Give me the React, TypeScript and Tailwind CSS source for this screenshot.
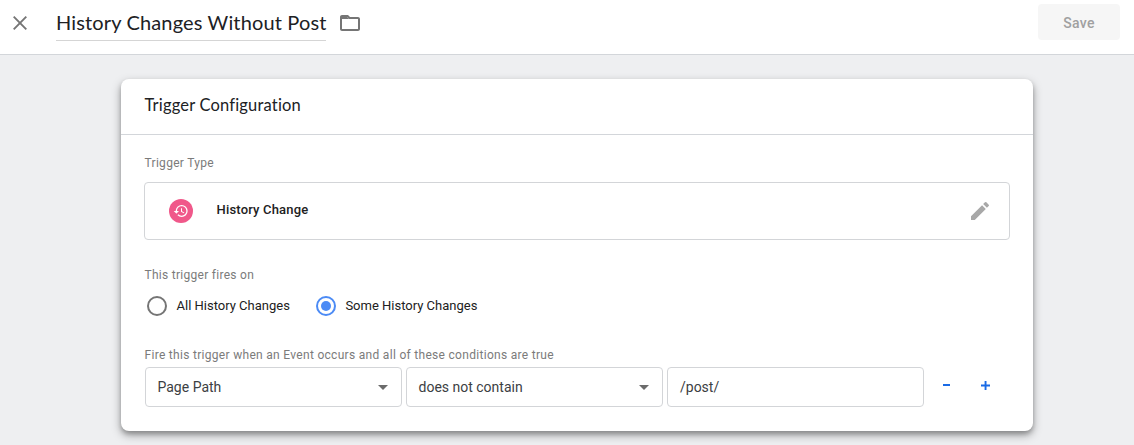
import React from "react";

function Radio({ label, checked }: { label: string; checked?: boolean }) {
  return (
    <label className="flex h-5 items-center gap-[9.5px]">
      <span
        className={
          checked
            ? "flex size-5 items-center justify-center rounded-full border-2 border-[#4c8bf5]"
            : "flex size-5 items-center justify-center rounded-full border-2 border-[#757575]"
        }
      >
        {checked && <span className="size-[10px] rounded-full bg-[#4c8bf5]" />}
      </span>
      <span className="text-[13px] leading-5 text-[#212121]">{label}</span>
    </label>
  );
}

function Select({ value }: { value: string }) {
  return (
    <div className="flex h-10 w-[257px] items-center justify-between rounded border border-[#d3d5d8] pr-[13px] pl-[11.5px]">
      <span className="text-sm leading-5 text-[#3c4043]">{value}</span>
      <svg className="h-[5px] w-[10px]" viewBox="0 0 10 5" fill="#6b6b6b">
        <path d="M0 0h10L5 5z" />
      </svg>
    </div>
  );
}

export default function App() {
  return (
    <div className="flex h-[445px] w-[1134px] flex-col overflow-hidden bg-[#eeeff1] font-['Roboto',sans-serif]">
      <header className="flex h-[55px] shrink-0 items-start border-b border-[#d3d6da] bg-white pl-[13px] pr-[14px]">
        <svg className="mt-4 size-[14px]" viewBox="0 0 14 14" fill="none" stroke="#757575" strokeWidth="1.9">
          <path d="M.7.7l12.6 12.6M13.3.7L.7 13.3" />
        </svg>
        <h1 className="ml-[29px] h-[41px] w-[270px] border-b border-[#d5d5d5] pt-2 font-['Lato',sans-serif] text-[20px] leading-7 tracking-[0.15px] whitespace-nowrap text-[#202124]">
          History Changes Without Post
        </h1>
        <svg className="mt-[11px] ml-3 size-6" viewBox="0 0 24 24" fill="#757575">
          <path d="M9.17 6l2 2H20v10H4V6h5.17M10 4H4c-1.1 0-1.99.9-1.99 2L2 18c0 1.1.9 2 2 2h16c1.1 0 2-.9 2-2V8c0-1.1-.9-2-2-2h-8l-2-2z" />
          <path d="M4 6h5.17l2 2H4z" />
        </svg>
        <button className="mt-1 ml-auto h-9 w-[82px] rounded bg-[#f6f6f6] pt-0.5 text-sm font-medium tracking-[0.25px] text-[#a0a0a0]">
          Save
        </button>
      </header>
      <main className="mt-6 ml-[121px] h-[352px] w-[912px] shrink-0 rounded-lg bg-white shadow-[0_4px_10px_rgba(0,0,0,0.35),0_3px_4px_rgba(0,0,0,0.18)]">
        <div className="h-14 border-b border-[#d3d6da] pt-[14px] pl-[23.5px]">
          <h2 className="font-['Lato',sans-serif] text-[16.5px] leading-6 tracking-[0.18px] text-[#202124]">
            Trigger Configuration
          </h2>
        </div>
        <div className="pt-5 pr-[23px] pl-[23px]">
          <div className="h-[27px] pl-[0.5px] text-xs leading-4 tracking-[0.3px] text-[#7b7b7b]">Trigger Type</div>
          <div className="flex h-[58px] items-center rounded border border-[#d3d5d8] pr-[17px] pl-6">
            <span className="flex size-6 items-center justify-center rounded-full bg-[#f0588a]">
              <svg className="mr-px size-4" viewBox="0 0 24 24" fill="#fff">
                <path d="M13 3a9 9 0 0 0-9 9H1l3.89 3.89.07.14L9 12H6c0-3.87 3.13-7 7-7s7 3.13 7 7-3.13 7-7 7c-1.93 0-3.68-.79-4.94-2.06l-1.42 1.42A8.95 8.95 0 0 0 13 21a9 9 0 0 0 0-18zm-1 5v5l4.28 2.54.72-1.21-3.5-2.08V8H12z" />
              </svg>
            </span>
            <span className="mb-[3px] ml-[23.5px] text-[13px] leading-5 font-medium tracking-[0.18px] text-[#212121]">
              History Change
            </span>
            <svg className="ml-auto size-6" viewBox="0 0 24 24" fill="#a8a8a8">
              <path d="M3 17.25V21h3.75L17.81 9.94l-3.75-3.75L3 17.25zM20.71 7.04a1 1 0 0 0 0-1.41l-2.34-2.34a1 1 0 0 0-1.41 0l-1.83 1.83 3.75 3.75 1.83-1.83z" />
            </svg>
          </div>
          <div className="mt-[27px] pl-[0.5px] text-xs leading-4 tracking-[0.28px] text-[#7b7b7b]">
            This trigger fires on
          </div>
          <div className="mt-[13px] flex gap-[26px] pl-[3px]">
            <Radio label="All History Changes" />
            <Radio label="Some History Changes" checked />
          </div>
          <div className="mt-[31px] pl-[0.5px] text-xs leading-4 tracking-[0.3px] text-[#7b7b7b]">
            Fire this trigger when an Event occurs and all of these conditions are true
          </div>
          <div className="mt-1 flex gap-1 pl-px">
            <Select value="Page Path" />
            <Select value="does not contain" />
            <div className="flex h-10 w-[257px] items-center rounded border border-[#d3d5d8] pl-3 text-sm text-[#3c4043]">
              /post/
            </div>
            <div className="ml-[15px] flex items-start gap-[31px] pt-[14px]">
              <svg className="h-[9px] w-[7px]" viewBox="0 0 7 9" fill="#1a6be6">
                <path d="M0 3h7v2H0z" />
              </svg>
              <svg className="size-[9px]" viewBox="0 0 9 9" fill="#1a6be6">
                <path d="M0 3.6h9v1.9H0zM3.6 0h1.9v9H3.6z" />
              </svg>
            </div>
          </div>
        </div>
      </main>
    </div>
  );
}
